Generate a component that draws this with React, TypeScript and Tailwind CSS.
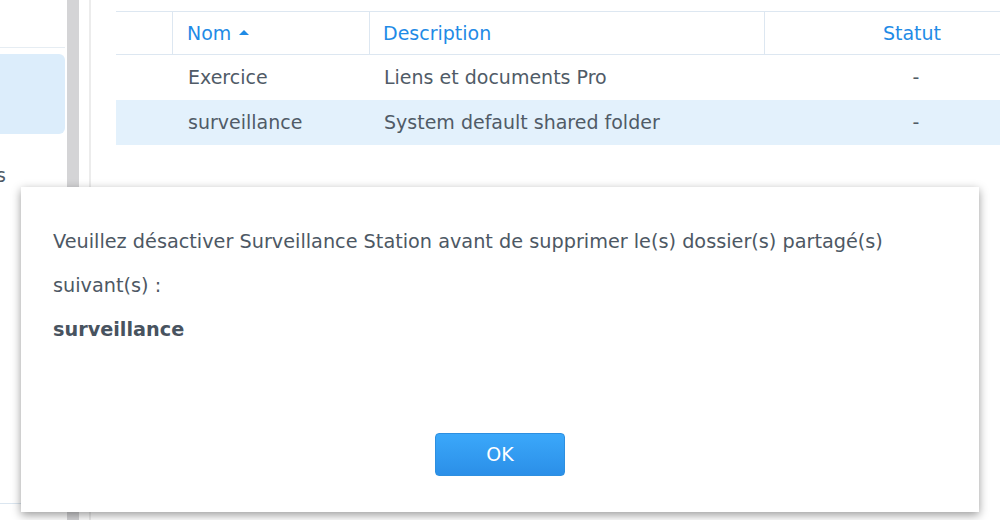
import React from 'react';

const rows = [
  { name: 'Exercice', description: 'Liens et documents Pro', status: '-', selected: false },
  { name: 'surveillance', description: 'System default shared folder', status: '-', selected: true },
];

function Sidebar() {
  return (
    <div className="flex w-[67px] shrink-0 flex-col">
      <div className="mr-[2px] h-[48px] border-b border-[#e6edf3]" />
      <div className="mt-[6px] mr-[2px] h-[80px] rounded-r-[6px] bg-[#dcedfb]" />
      <div className="mt-[28px] h-[26px] overflow-hidden whitespace-nowrap text-[19px] leading-[26px] text-[#4f5a66]">
        <span className="-ml-[4px]">s</span>
      </div>
      <div className="mt-auto mb-[16px] border-b border-[#dbe6f0]" />
    </div>
  );
}

function SharedFolderTable() {
  return (
    <div className="mt-[11px] w-[943px]">
      {/* Header */}
      <div className="flex h-[44px] border-y border-[#dde7f1] text-[#1f8be6]">
        <div className="w-[57px] border-r border-[#dde7f1]" />
        <div className="flex w-[197px] items-center gap-[8px] border-r border-[#dde7f1] pl-[14px]">
          <span>Nom</span>
          <svg width="10" height="6" viewBox="0 0 10 6" className="mt-[-2px]">
            <path d="M0 6 L5 1 L10 6 Z" fill="#1f8be6" />
          </svg>
        </div>
        <div className="flex w-[395px] items-center border-r border-[#dde7f1] pl-[13px]">Description</div>
        <div className="flex w-[294px] items-center justify-center">Statut</div>
      </div>

      {/* Rows */}
      {rows.map((row) => (
        <div
          key={row.name}
          className={`flex h-[45px] items-center text-[#505b67] ${row.selected ? 'bg-[#e3f1fc]' : 'bg-white'}`}
        >
          <div className="w-[57px]" />
          <div className="w-[197px] pl-[15px]">{row.name}</div>
          <div className="w-[395px] pl-[14px]">{row.description}</div>
          <div className="w-[294px] pl-[8px] text-center">{row.status}</div>
        </div>
      ))}
    </div>
  );
}

function AlertDialog() {
  return (
    <div className="absolute left-[21px] top-[187px] flex h-[325px] w-[958px] flex-col bg-white shadow-[0_3px_9px_rgba(0,0,0,0.4)]">
      <div className="px-[32px] pt-[33px] text-[19.25px] leading-[44px] text-[#4d5864]">
        <p>Veuillez désactiver Surveillance Station avant de supprimer le(s) dossier(s) partagé(s) suivant(s) :</p>
        <p className="font-bold text-[#48535f]">surveillance</p>
      </div>
      <div className="mt-auto flex justify-center pb-[36px]">
        <button className="h-[43px] w-[130px] rounded-[4px] border border-[#2d8fe0] bg-gradient-to-b from-[#3ba8fa] to-[#2b8fe8] text-[19px] text-white">
          OK
        </button>
      </div>
    </div>
  );
}

export default function App() {
  return (
    <div className="relative h-[520px] w-[1000px] overflow-hidden bg-white font-['DejaVu_Sans',Verdana,sans-serif] text-[19px]">
      <div className="flex h-full">
        <Sidebar />
        <div className="w-[12px] shrink-0 bg-[#d4d4d6]" />
        <div className="w-[10px] shrink-0" />
        <div className="w-[2px] shrink-0 bg-[#ececec]" />
        <div className="flex-1 overflow-hidden pl-[25px]">
          <SharedFolderTable />
        </div>
      </div>
      <AlertDialog />
    </div>
  );
}
